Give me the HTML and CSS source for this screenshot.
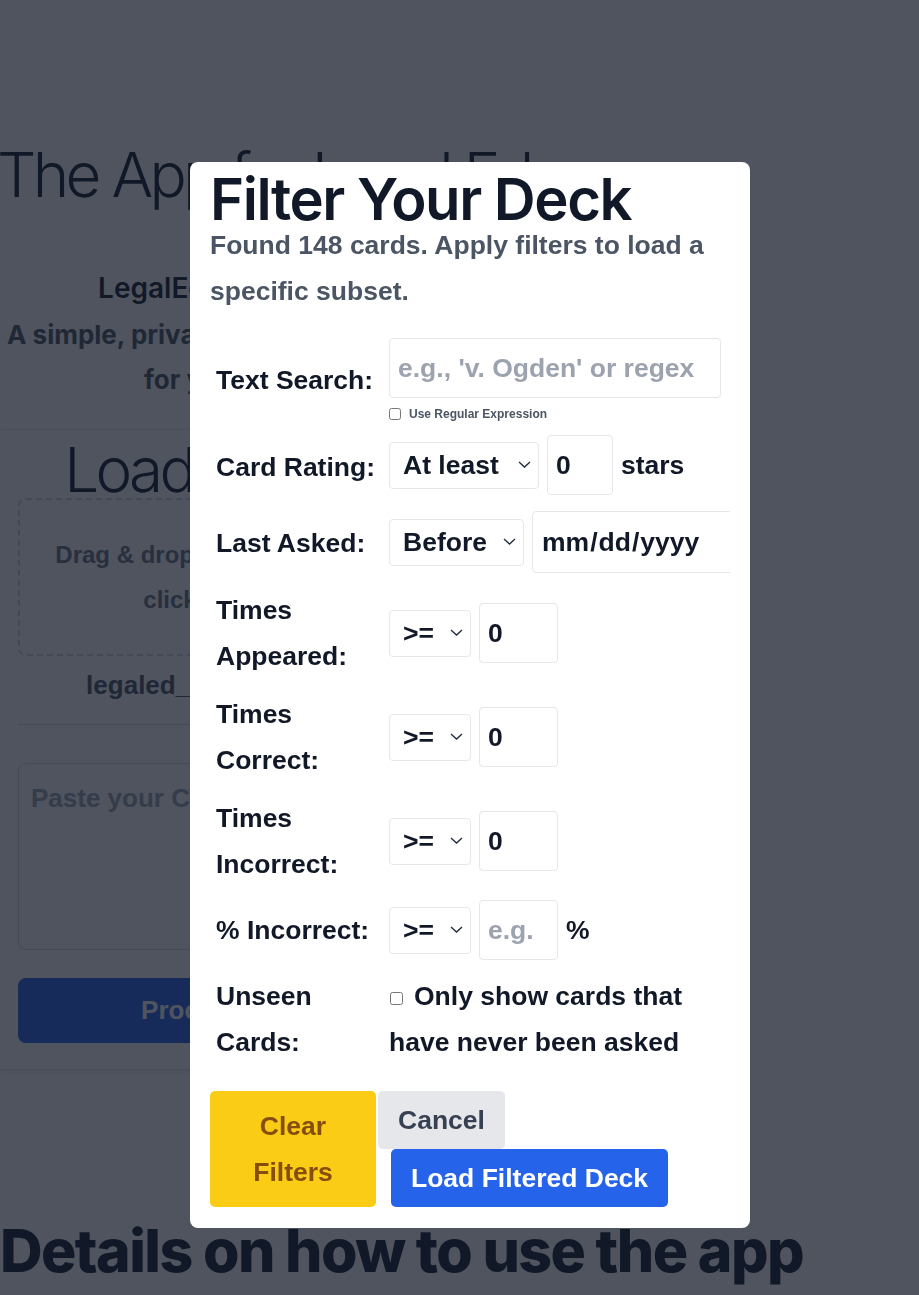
FILE: index.html
```html
<!DOCTYPE html>
<html lang="en">
  <head>
    <meta charset="UTF-8" />
    <title>LegalEd Flashcard</title>
    <link rel="stylesheet" href="styles.css">
  </head>
  <body>
    <main class="page">
      <section class="hero">
        <h1 class="hero-title">The App for Legal Ed</h1>
        <p class="hero-name">LegalEd Flashcard</p>
        <p class="hero-tagline">A simple, private flashcard trainer for your bar.</p>
      </section>

      <section class="loader">
        <h2 class="loader-title">Load a Deck</h2>
        <div class="dropzone">Drag &amp; drop your file here, or click to select</div>
        <p class="file-name">legaled_deck_148.csv</p>
        <hr class="divider" />
        <textarea class="paste-box" placeholder="Paste your CSV data here..."></textarea>
        <button class="process-btn">Process CSV</button>
      </section>

      <h2 class="details-title">Details on how to use the app</h2>
    </main>

    <div class="overlay">
      <div class="modal">
        <h2 class="modal-title">Filter Your Deck</h2>
        <p class="modal-sub">Found 148 cards. Apply filters to load a specific subset.</p>

        <div class="filter-grid">
          <div class="filter-label">Text Search:</div>
          <div class="filter-cell">
            <input type="text" class="field field-text" placeholder="e.g., 'v. Ogden' or regex" />
            <label class="regex-opt"><input type="checkbox" class="small-check" /> Use Regular Expression</label>
          </div>

          <div class="filter-label">Card Rating:</div>
          <div class="controls controls-rating">
            <span class="select-wrap">
              <select class="field-select w-rating"><option>At least</option><option>At most</option></select>
              <svg class="chevron" viewBox="0 0 13 7" width="13" height="7"><path d="M1 1l5.5 5 5.5-5" /></svg>
            </span>
            <input type="number" class="field field-num w-stars" value="0" />
            <span>stars</span>
          </div>

          <div class="filter-label">Last Asked:</div>
          <div class="controls controls-date">
            <span class="select-wrap">
              <select class="field-select w-before"><option>Before</option><option>After</option></select>
              <svg class="chevron" viewBox="0 0 13 7" width="13" height="7"><path d="M1 1l5.5 5 5.5-5" /></svg>
            </span>
            <input type="date" class="field field-date" />
          </div>

          <div class="filter-label">Times Appeared:</div>
          <div class="controls">
            <span class="select-wrap">
              <select class="field-select w-op"><option>&gt;=</option><option>&lt;=</option></select>
              <svg class="chevron" viewBox="0 0 13 7" width="13" height="7"><path d="M1 1l5.5 5 5.5-5" /></svg>
            </span>
            <input type="number" class="field field-num" value="0" />
          </div>

          <div class="filter-label">Times Correct:</div>
          <div class="controls">
            <span class="select-wrap">
              <select class="field-select w-op"><option>&gt;=</option><option>&lt;=</option></select>
              <svg class="chevron" viewBox="0 0 13 7" width="13" height="7"><path d="M1 1l5.5 5 5.5-5" /></svg>
            </span>
            <input type="number" class="field field-num" value="0" />
          </div>

          <div class="filter-label">Times Incorrect:</div>
          <div class="controls">
            <span class="select-wrap">
              <select class="field-select w-op"><option>&gt;=</option><option>&lt;=</option></select>
              <svg class="chevron" viewBox="0 0 13 7" width="13" height="7"><path d="M1 1l5.5 5 5.5-5" /></svg>
            </span>
            <input type="number" class="field field-num" value="0" />
          </div>

          <div class="filter-label">% Incorrect:</div>
          <div class="controls">
            <span class="select-wrap">
              <select class="field-select w-op"><option>&gt;=</option><option>&lt;=</option></select>
              <svg class="chevron" viewBox="0 0 13 7" width="13" height="7"><path d="M1 1l5.5 5 5.5-5" /></svg>
            </span>
            <input type="number" class="field field-num" placeholder="e.g." />
            <span>%</span>
          </div>

          <div class="filter-label">Unseen Cards:</div>
          <div class="filter-cell">
            <label class="unseen-opt"><input type="checkbox" class="big-check" />Only show cards that have never been asked</label>
          </div>
        </div>

        <div class="modal-actions">
          <button class="btn btn-clear">Clear Filters</button>
          <div class="action-group">
            <button class="btn btn-cancel">Cancel</button>
            <button class="btn btn-load">Load Filtered Deck</button>
          </div>
        </div>
      </div>
    </div>
  </body>
</html>
```

FILE: styles.css
```css
* {
  box-sizing: border-box;
}
body {
  margin: 0;
  background: #fff;
  color: #111827;
  font-family: "Liberation Sans", Arial, sans-serif;
  overflow: hidden;
}

/* page behind the dialog */
.page {
  width: 444px;
}
.hero {
  text-align: center;
  padding-bottom: 27px;
}
.hero-title {
  margin: 0 0 0 -3px;
  padding-top: 137px;
  font-family: Inter, sans-serif;
  font-weight: 300;
  font-size: 62px;
  line-height: 75px;
  letter-spacing: -0.06em;
  text-align: left;
  white-space: nowrap;
}
.hero-name {
  margin: 54px 0 0;
  font-family: Inter, sans-serif;
  font-weight: 600;
  font-size: 28px;
  line-height: 45px;
}
.hero-tagline {
  margin: 1px 0 0;
  font-family: Inter, sans-serif;
  font-weight: 700;
  font-size: 26px;
  line-height: 45px;
  color: #4b5563;
}
.loader {
  border-top: 1px solid #e5e7eb;
  padding: 0 18px 26px;
  text-align: center;
  box-shadow: 0 2px 4px rgba(0, 0, 0, 0.12);
}
.loader-title {
  margin: 12px 0 0 4px;
  font-family: Inter, sans-serif;
  font-weight: 300;
  font-size: 62px;
  line-height: 56px;
  letter-spacing: -0.06em;
  white-space: nowrap;
}
.dropzone {
  border: 2px dashed #d1d5db;
  border-radius: 8px;
  padding: 32px 20px;
  font-weight: bold;
  font-size: 24px;
  line-height: 45px;
  color: #6b7280;
}
.file-name {
  margin: 7px 0 0;
  font-weight: bold;
  font-size: 26px;
  line-height: 45px;
  color: #4b5563;
}
.divider {
  margin: 16px 0 0;
  border: 0;
  border-top: 1px solid #d1d5db;
}
.paste-box {
  display: block;
  width: 100%;
  height: 187px;
  margin-top: 38px;
  padding: 19px 12px;
  border: 1px solid #d1d5db;
  border-radius: 8px;
  font: bold 26px "Liberation Sans", Arial, sans-serif;
  resize: none;
}
.paste-box::placeholder {
  color: #9ca3af;
}
.process-btn {
  display: block;
  width: 100%;
  height: 65px;
  margin-top: 28px;
  border: none;
  border-radius: 8px;
  background: #2563eb;
  color: #fff;
  font: bold 26px "Liberation Sans", Arial, sans-serif;
}
.details-title {
  margin: 146px 0 0;
  font-family: Inter, sans-serif;
  font-weight: 800;
  font-size: 59px;
  line-height: 72px;
  letter-spacing: -1.6px;
  white-space: nowrap;
}

/* dialog */
.overlay {
  position: fixed;
  inset: 0;
  background: rgba(17, 24, 39, 0.74);
  padding: 162px 0 0 190px;
}
.modal {
  width: 560px;
  background: #fff;
  border-radius: 8px;
  padding: 8px 20px 21px;
}
.modal-title {
  margin: 0;
  font-family: Inter, sans-serif;
  font-weight: 600;
  font-size: 58px;
  line-height: 1;
  letter-spacing: -0.025em;
  color: #111827;
  white-space: nowrap;
}
.modal-sub {
  margin: -6px 0 0;
  font-weight: bold;
  font-size: 26.5px;
  line-height: 46px;
  color: #4b5563;
}
.filter-grid {
  display: grid;
  grid-template-columns: 161px minmax(0, 1fr);
  column-gap: 12px;
  row-gap: 12px;
  align-items: center;
  margin-top: 24px;
  padding-left: 6px;
  overflow: hidden;
  font-weight: bold;
  font-size: 26.5px;
  line-height: 46px;
}
.filter-label {
  color: #111827;
}
.controls {
  display: flex;
  align-items: center;
  gap: 8px;
  min-height: 62px;
}
.controls-rating {
  margin-bottom: 3px;
}
.controls-date {
  margin-bottom: 2px;
}
.field {
  height: 60px;
  padding: 0 8px;
  border: 1px solid #e5e7eb;
  border-radius: 4px;
  background: #fff;
  color: #111827;
  font: bold 26.5px "Liberation Sans", Arial, sans-serif;
}
.field::placeholder {
  color: #9ca3af;
}
.field-text {
  display: block;
  width: 332px;
}
.field-num {
  width: 79px;
  flex-shrink: 0;
  -moz-appearance: textfield;
}
.field-num::-webkit-inner-spin-button,
.field-num::-webkit-outer-spin-button {
  -webkit-appearance: none;
  margin: 0;
}
.w-stars {
  width: 66px;
}
.field-date {
  width: 250px;
  height: 62px;
  flex-shrink: 0;
}
.select-wrap {
  position: relative;
  display: inline-flex;
  flex-shrink: 0;
}
.field-select {
  -webkit-appearance: none;
  appearance: none;
  height: 47px;
  padding: 0 30px 0 13px;
  border: 1px solid #e5e7eb;
  border-radius: 4px;
  background: #fff;
  color: #111827;
  font: bold 26.5px "Liberation Sans", Arial, sans-serif;
}
.w-rating {
  width: 150px;
}
.w-before {
  width: 135px;
}
.w-op {
  width: 82px;
}
.chevron {
  position: absolute;
  right: 8px;
  top: 50%;
  margin-top: -4px;
  pointer-events: none;
}
.chevron path {
  fill: none;
  stroke: #1f2937;
  stroke-width: 1.3;
}
.regex-opt {
  display: flex;
  align-items: center;
  margin-top: 8px;
  font-size: 12px;
  line-height: 16px;
  color: #4b5563;
}
.small-check {
  width: 12px;
  height: 12px;
  margin: 0 8px 0 0;
}
.unseen-opt {
  display: block;
  color: #111827;
}
.big-check {
  width: 13px;
  height: 13px;
  margin: 0 11px 2px 1px;
}
.modal-actions {
  display: flex;
  gap: 2px;
  margin-top: 26px;
}
.btn {
  border: none;
  border-radius: 5px;
  padding: 6px 20px;
  font: bold 26.5px "Liberation Sans", Arial, sans-serif;
  line-height: 46px;
  cursor: pointer;
}
.btn-clear {
  width: 166px;
  background: #facc15;
  color: #854d0e;
}
.action-group {
  display: flex;
  flex-wrap: wrap;
  align-items: flex-start;
  width: 300px;
}
.btn-cancel {
  background: #e5e7eb;
  color: #374151;
}
.btn-load {
  margin-left: 13px;
  background: #2563eb;
  color: #fff;
}
```
